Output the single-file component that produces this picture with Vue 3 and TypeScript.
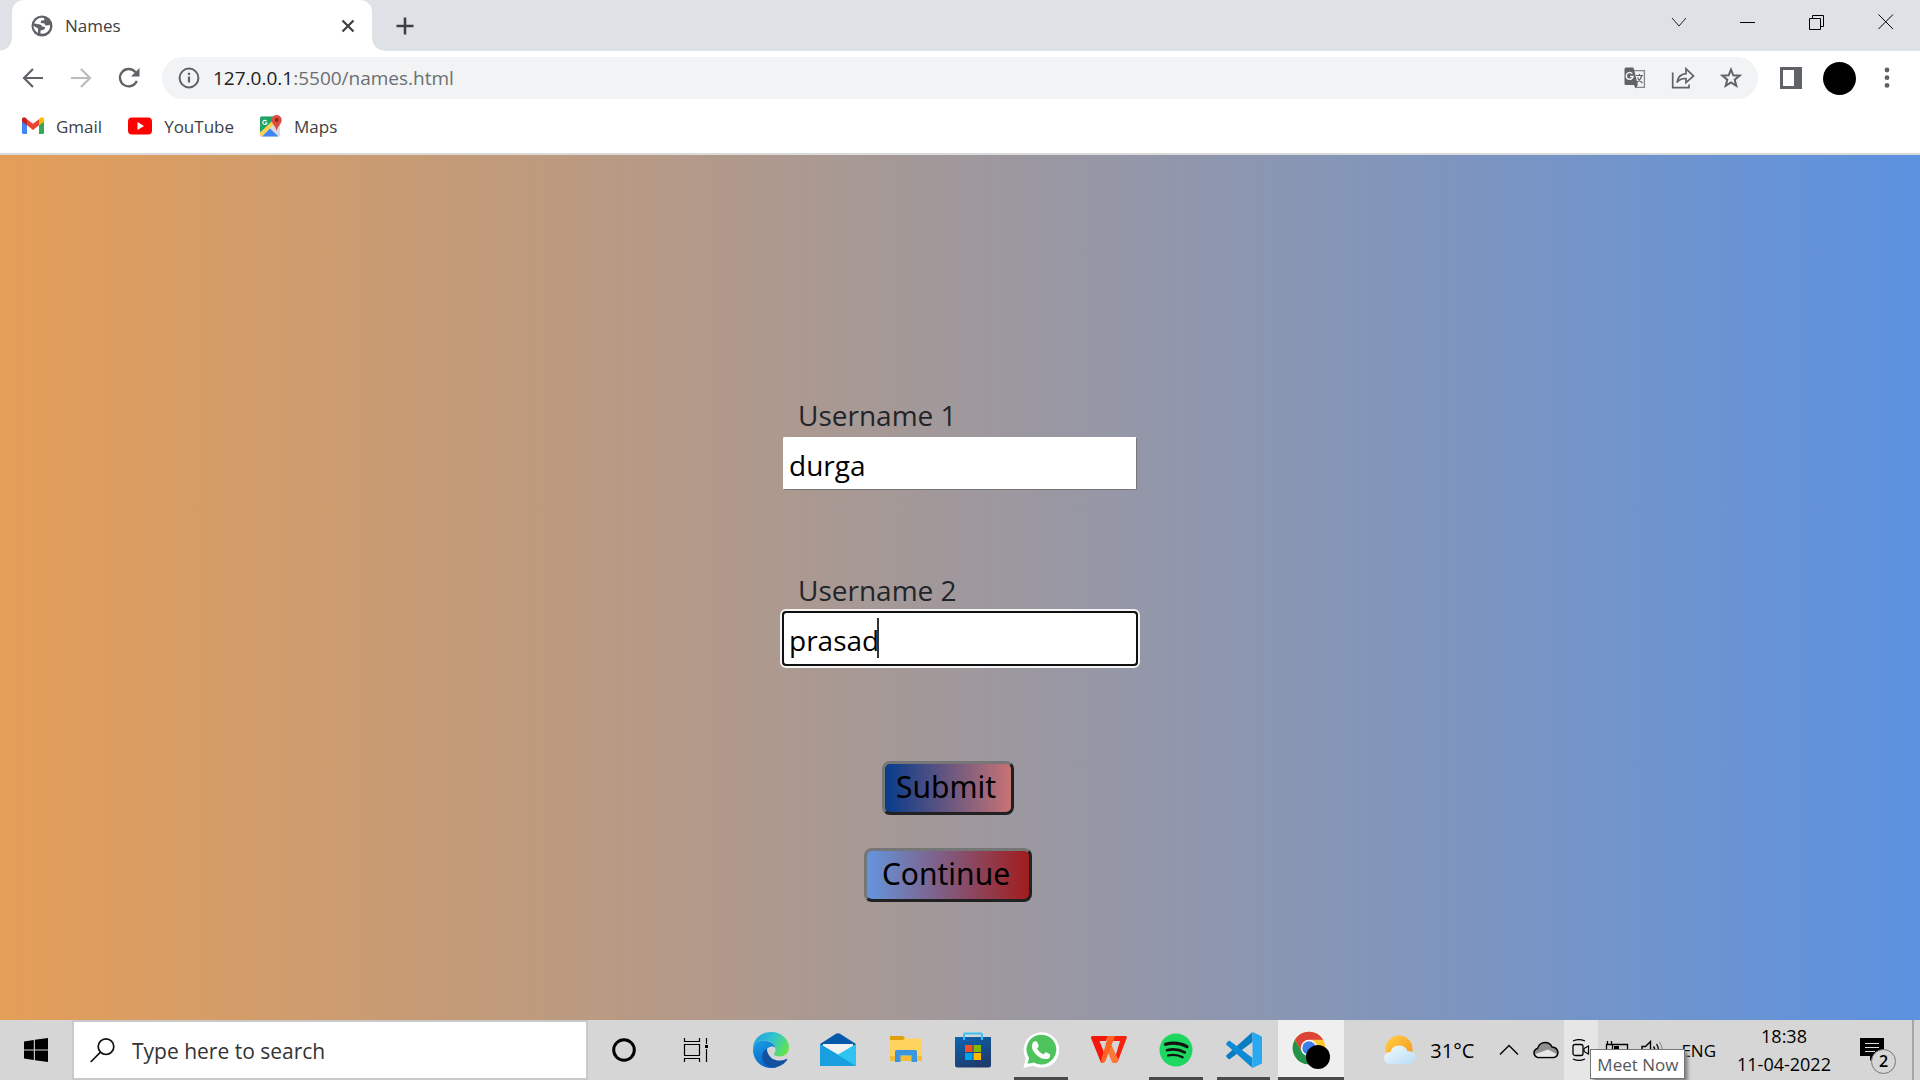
<script setup lang="ts">
import { ref } from 'vue'

const address = ref('127.0.0.1:5500/names.html')
const username1 = ref('durga')
const username2 = ref('prasad')
</script>

<template>
  <div class="desktop">
    <header class="browser">
      <div class="tabstrip">
        <div class="tab">
          <svg class="globe" width="22" height="22" viewBox="0 0 22 22">
            <circle cx="11" cy="11" r="10.5" fill="#5f6368" />
            <path d="M8.500 3.000 C6 4 4 6 3.200 8.500 L8 9.200 Q11 9.800 11 11.500 L14 12 Q14.300 14.500 12 15 L9.500 15.500 V18.600 Q14.500 19.300 17.600 15.500 Q19.500 13 19 10 L15.500 10.500 Q13.500 10.500 13.500 8.500 L10 8 Q9 6.800 10.500 5.600 L13.500 5.200 L13 3.100 Q10.500 2.400 8.500 3Z" fill="#fff" />
            <path d="M2.400 10.800 L7 13.500 V17.900 Q2.800 15.800 2.400 10.800Z" fill="#fff" />
          </svg>
          <span class="tab-title">Names</span>
          <button class="plain" aria-label="Close tab">
            <svg width="14" height="14" viewBox="0 0 14 14"><path d="M1.500 1.500L12.500 12.500M12.500 1.500L1.500 12.500" stroke="#3c4043" stroke-width="2.200" /></svg>
          </button>
        </div>
        <button class="plain new-tab" aria-label="New tab">
          <svg width="18" height="18" viewBox="0 0 18 18"><path d="M9 0.500V17.500M0.500 9H17.500" stroke="#3c4043" stroke-width="2.600" /></svg>
        </button>
        <div class="window-controls">
          <button class="plain" aria-label="Search tabs">
            <svg width="16" height="16" viewBox="0 0 16 16"><path d="M1 4L8 12L15 4" fill="none" stroke="#222" /></svg>
          </button>
          <button class="plain" aria-label="Minimize">
            <svg width="16" height="16" viewBox="0 0 16 16"><path d="M0 8.500H15" stroke="#000" /></svg>
          </button>
          <button class="plain" aria-label="Restore">
            <svg width="16" height="16" viewBox="0 0 16 16"><path d="M0.500 4.500H11.500V15.500H0.500ZM3.500 4V1.500H14.500V12.500H12" fill="none" stroke="#000" /></svg>
          </button>
          <button class="plain" aria-label="Close">
            <svg width="16" height="16" viewBox="0 0 16 16"><path d="M0.500 0.500L15 15M15 0.500L0.500 15" stroke="#000" /></svg>
          </button>
        </div>
      </div>

      <div class="toolbar">
        <div class="nav">
          <button class="plain" aria-label="Back">
            <svg width="22" height="22" viewBox="0 0 22 22"><path d="M21 11H2.500M11 2L2 11L11 20" fill="none" stroke="#5f6368" stroke-width="2.200" /></svg>
          </button>
          <button class="plain" aria-label="Forward">
            <svg width="22" height="22" viewBox="0 0 22 22"><path d="M1 11H19.500M11 2L20 11L11 20" fill="none" stroke="#babcbe" stroke-width="2.200" /></svg>
          </button>
          <button class="plain" aria-label="Reload">
            <svg width="22" height="22" viewBox="0 0 22 22"><path d="M18.800 13.800A8.700 8.700 0 1 1 17.500 5.300" fill="none" stroke="#5f6368" stroke-width="2.300" /><path d="M21.500 1V9.500H13Z" fill="#5f6368" /></svg>
          </button>
        </div>
        <div class="omnibox">
          <svg width="22" height="22" viewBox="0 0 22 22"><circle cx="11" cy="11" r="9.400" fill="none" stroke="#5f6368" stroke-width="2" /><path d="M11 9.500V15.500M11 5.800V8" stroke="#5f6368" stroke-width="2.200" /></svg>
          <div class="address" :aria-label="address"><span class="host">127.0.0.1</span>:5500/names.html</div>
          <div class="omni-actions">
            <button class="plain" aria-label="Translate">
              <svg width="22" height="22" viewBox="0 0 22 22">
                <path d="M10 3.600H20.400V20.400H11.500" fill="none" stroke="#85888c" stroke-width="1.300" />
                <path d="M2 0.500H8.500Q9.500 .5 9.800 1.500L13.800 18L11.500 21.500L10 18H2Q.5 18 .5 16.500V2Q.5 .5 2 .5Z" fill="#5f6368" />
                <path d="M8.300 6.800A3.400 3.400 0 1 0 9 9.600H6" fill="none" stroke="#f1f3f4" stroke-width="1.500" />
                <path d="M12 8.500H19M15.400 7V8.500M17.700 8.500Q17 12.500 13 15.500M13.500 10.500Q15 14 18.500 16" fill="none" stroke="#5f6368" stroke-width="1.200" />
              </svg>
            </button>
            <button class="plain" aria-label="Share">
              <svg width="24" height="22" viewBox="0 0 24 22"><path d="M1.700 5.500V20.700H18V17.500M6 15.500Q7 7.500 15 6.700V1.800L22.500 9L15 15.700V11.500Q9 11.200 6 15.500Z" fill="none" stroke="#5f6368" stroke-width="1.700" /></svg>
            </button>
            <button class="plain" aria-label="Bookmark">
              <svg width="22" height="22" viewBox="0 0 22 22"><path d="M11 2.500L13.300 8.300L19.500 8.700L14.700 12.700L16.300 18.900L11 15.500L5.700 18.900L7.300 12.700L2.500 8.700L8.700 8.300Z" fill="none" stroke="#5f6368" stroke-width="2" /></svg>
            </button>
          </div>
        </div>
        <div class="tool-actions">
          <button class="plain" aria-label="Side panel">
            <svg width="22" height="22" viewBox="0 0 22 22"><path d="M0 0H22V22H0ZM3 3V19H14V3Z" fill="#5f6368" fill-rule="evenodd" /></svg>
          </button>
          <button class="plain avatar" aria-label="Profile"></button>
          <button class="plain" aria-label="Menu">
            <svg width="6" height="22" viewBox="0 0 6 22" fill="#5f6368"><circle cx="3" cy="3" r="2.400" /><circle cx="3" cy="10.700" r="2.400" /><circle cx="3" cy="18.400" r="2.400" /></svg>
          </button>
        </div>
      </div>

      <nav class="bookmarks">
        <a href="#gmail">
          <svg width="22" height="18" viewBox="0 0 22 18"><path d="M0 4L5 7.500V17H1.500Q0 17 0 15.500Z" fill="#4285f4" /><path d="M22 4L17 7.500V17H20.500Q22 17 22 15.500Z" fill="#34a853" /><path d="M5 2.200L11 6.800L17 2.200V8.300L11 12.900L5 8.300Z" fill="#ea4335" /><path d="M0 4V2.500C0 .5 2 -.4 3.700 .9L5 2V8.300L0 4.800Z" fill="#c5221f" /><path d="M22 4V2.500C22 .5 20 -.4 18.300 .9L17 2V8.300L22 4.800Z" fill="#fbbc04" /></svg>
          <span>Gmail</span>
        </a>
        <a href="#youtube">
          <svg width="24" height="18" viewBox="0 0 24 18"><rect y="0.500" width="24" height="17" rx="4" fill="#f00" /><path d="M9.500 5L16 9L9.500 13Z" fill="#fff" /></svg>
          <span>YouTube</span>
        </a>
        <a href="#maps">
          <svg width="22" height="22" viewBox="0 0 22 22">
            <rect y="1.500" width="20" height="20" rx="1.500" fill="#dadce0" />
            <path d="M1.500 1.500H17L0 18.500V3Q0 1.500 1.500 1.500Z" fill="#1fa463" />
            <path d="M2 21.500L10 13.500L18.500 21.500Z" fill="#4285f4" />
            <path d="M0 17.500V20Q.2 21.300 1.500 21.500L14 9L12 6.500Z" fill="#ffd04b" />
            <path d="M6.500 6.100A2.100 2.100 0 1 0 6.900 8H5.200" fill="none" stroke="#fff" stroke-width="1.100" />
            <path d="M16.700 0A5 5 0 0 1 21.700 5C21.700 9 17.300 11 16.700 16.500C16 11 11.700 9 11.700 5A5 5 0 0 1 16.700 0Z" fill="#e14b3d" /><circle cx="16.700" cy="5" r="1.900" fill="#7d2a24" />
          </svg>
          <span>Maps</span>
        </a>
      </nav>
    </header>

    <main class="page">
      <form class="names" @submit.prevent>
        <div class="field">
          <label for="user1">Username 1</label>
          <input id="user1" v-model="username1" type="text" />
        </div>
        <div class="field">
          <label for="user2">Username 2</label>
          <div class="active-box">
            <input id="user2" v-model="username2" class="active" type="text" />
            <i class="caret"></i>
          </div>
        </div>
        <div class="actions">
          <button class="submit" type="submit">Submit</button>
          <button class="continue" type="button">Continue</button>
        </div>
      </form>
    </main>

    <footer class="taskbar">
      <button class="plain start" aria-label="Start">
        <svg width="24" height="24" viewBox="0 0 24 24"><path d="M0 3.400L9.800 2V11.400H0ZM10.900 1.800L24 0V11.400H10.900ZM0 12.500H9.800V22L0 20.600ZM10.900 12.500H24V24L10.900 22.200Z" /></svg>
      </button>
      <div class="search">
        <svg width="25" height="25" viewBox="0 0 25 25"><circle cx="16" cy="8.700" r="7.800" fill="none" stroke="#111" stroke-width="1.700" /><path d="M10.500 14.200L.7 24" stroke="#111" stroke-width="1.700" /></svg>
        <input type="text" placeholder="Type here to search" aria-label="Search" />
      </div>
      <button class="plain system" aria-label="Cortana">
        <svg width="24" height="24" viewBox="0 0 24 24"><circle cx="12" cy="12" r="10.300" fill="none" stroke="#000" stroke-width="3" /></svg>
      </button>
      <button class="plain system" aria-label="Task view">
        <svg width="26" height="24" viewBox="0 0 26 24"><path d="M1.500 0V3.500H16.500V0M1.500 6.500H16.500V17.500H1.500ZM1.500 24V20.500H16.500V24M23.500 0V6M23.500 11V24" fill="none" stroke="#000" stroke-width="1.200" /><rect x="22" y="7" width="3" height="3" /></svg>
      </button>

      <div class="apps">
        <button class="plain app" aria-label="Edge">
          <svg width="36" height="36" viewBox="0 0 36 36">
            <defs>
              <linearGradient id="edge-top" x1="0" y1="0.200" x2="1" y2="0.600"><stop offset="0" stop-color="#249fdc" /><stop offset=".5" stop-color="#30c5cf" /><stop offset="1" stop-color="#63e34e" /></linearGradient>
              <linearGradient id="edge-side" x1="0" y1="0" x2="0.300" y2="1"><stop offset="0" stop-color="#1b9de2" /><stop offset="1" stop-color="#0669cc" /></linearGradient>
            </defs>
            <path d="M0 17C0 7 8 0 18 0C29 0 36 8 36 15C36 21 32 24.500 27 24.500C23 24.500 21 23.500 21 22.300C21 21 23 20.500 22.500 17C22 12 17 8.500 11.500 8.500C5 8.500 1 12.500 0 17Z" fill="url(#edge-top)" />
            <path d="M0 18C.5 12 5 8.500 11 8.500C17 8.500 22 12.500 22.500 16C20 13.500 15 14.500 13.500 18C11 25 17 35 24 35C13 39 0 31 0 18Z" fill="url(#edge-side)" />
            <path d="M13.800 17C11 18 9.200 20.500 9.200 24.500C9.200 31 15 36 21 35.500C27 35 32 31.500 34.300 27.500C34.500 26.800 34 26.600 33.300 27C25 31 15 27.500 13.800 17Z" fill="#1250a0" />
          </svg>
        </button>
        <button class="plain app" aria-label="Mail">
          <svg width="36" height="34" viewBox="0 0 36 34">
            <path d="M0 11L16 .8Q18 -.4 20 .8L36 11V22H0Z" fill="#0759a9" />
            <path d="M3 11H33V18L18 26L3 18Z" fill="#f2f2f2" />
            <path d="M0 11L18 21.500L36 11V33H0Z" fill="#2fc3f2" /><path d="M0 11L36 33H0Z" fill="#199edf" />
          </svg>
        </button>
        <button class="plain app" aria-label="File Explorer">
          <svg width="32" height="28" viewBox="0 0 32 28">
            <path d="M0 1Q0 0 1 0H13Q14 0 14.500 2.500H31Q32 2.500 32 3.500V25H0Z" fill="#ffd35d" /><path d="M0 1Q0 0 1 0H13L15 2L13 4H0Z" fill="#dfa00b" /><path d="M0 20H32V24Q32 25 31 25H1Q0 25 0 24Z" fill="#f5bd35" />
            <path d="M5 26V15.500Q5 14 6.500 14H25.500Q27 14 27 15.500V26H21.500V19.500H10.500V26Z" fill="#3a96e0" />
          </svg>
        </button>
        <button class="plain app" aria-label="Microsoft Store">
          <svg width="36" height="36" viewBox="0 0 36 36">
            <defs><linearGradient id="store" x1="0" y1="0" x2="0.500" y2="1"><stop offset="0" stop-color="#0a65b5" /><stop offset="1" stop-color="#1e3c6c" /></linearGradient></defs>
            <path d="M0 5H36V33Q36 35.500 33.500 35.500H2.500Q0 35.500 0 33Z" fill="url(#store)" />
            <path d="M9 8V2.800Q9 1.500 10.300 1.500H25.700Q27 1.500 27 2.800V8" fill="none" stroke="#35c1f1" stroke-width="2" />
            <path d="M10 13H17.500V20H10Z" fill="#f25022" /><path d="M18.500 13H26V20H18.500Z" fill="#7fba00" /><path d="M10 21H17.500V28H10Z" fill="#00a4ef" /><path d="M18.500 21H26V28H18.500Z" fill="#ffb900" />
          </svg>
        </button>
        <button class="plain app running" aria-label="WhatsApp">
          <svg width="36" height="36" viewBox="0 0 36 36">
            <path d="M.3 36L2.800 26.500A17.800 17.800 0 1 1 10 33.700Z" fill="#fff" />
            <path d="M4.500 31.700L6.100 26A14.900 14.900 0 1 1 11 30.500Z" fill="#4fc35c" />
            <path d="M10.500 9.800Q12.500 8.500 14 9.800L15.700 13.700Q15.800 14.900 14 16.500Q16 20.700 20.500 22.500Q22.200 20.200 23.200 20.300L27 22.200Q28 26.700 23 27Q18 27.200 13 22.500Q8 17 9 13Q9.500 10.700 10.500 9.800Z" fill="#fff" />
          </svg>
        </button>
        <button class="plain app" aria-label="WPS Office">
          <svg width="36" height="28" viewBox="0 0 36 28">
            <path d="M0 1Q.5 0 2 0H17L15 5H8.500L14.800 21L11 27Q10 27 9.500 25.500L0 2Z" fill="#f5160c" />
            <path d="M23 0H34Q36.500 0 35.700 2L27 25Q26 27.500 22.500 27L29 5H21Z" fill="#f6220e" />
            <path d="M17 9L20.500 9L27.500 24L25.500 27H22.500Q21.500 27 21 26L15.500 13Z" fill="#ff7734" />
            <path d="M17 0H24L14.500 25Q13.500 27.500 10.500 27L10 25Z" fill="#ff6424" />
          </svg>
        </button>
        <button class="plain app running" aria-label="Spotify">
          <svg width="34" height="34" viewBox="0 0 34 34"><circle cx="17" cy="17" r="16.500" fill="#1ed760" /><path d="M6.500 11.300Q18 8.200 28 13.700" fill="none" stroke="#111" stroke-width="3.200" stroke-linecap="round" /><path d="M8 17.200Q17.500 14.800 25.800 19.400" fill="none" stroke="#111" stroke-width="2.700" stroke-linecap="round" /><path d="M9 22.500Q17 20.700 23.700 24.300" fill="none" stroke="#111" stroke-width="2.200" stroke-linecap="round" /></svg>
        </button>
        <button class="plain app running" aria-label="Visual Studio Code">
          <svg width="36" height="36" viewBox="0 0 36 36">
            <path d="M26.500 0V10L4 27Q3 27.500 2 26.600L.5 25Q-.3 24 .7 23Z" fill="#0a7dc1" />
            <path d="M26.500 36V26L4 9Q3 8.500 2 9.400L.5 11Q-.3 12 .7 13Z" fill="#0b8ad5" />
            <path d="M26.500 0L35 4Q36 4.500 36 5.500V30.500Q36 31.500 35 32L26.500 36Z" fill="#29a9f2" />
          </svg>
        </button>
        <button class="plain app running current" aria-label="Chrome">
          <svg width="38" height="38" viewBox="0 0 38 38">
            <circle cx="17" cy="17" r="16.300" fill="#ffc62d" />
            <path d="M2.900 8.800A16.300 16.300 0 0 1 31.100 8.800H17L9.900 21.100Z" fill="#dc4437" />
            <path d="M2.900 8.800L9.900 21.100L17 25.200L24 21.100L17 33.300A16.300 16.300 0 0 1 2.900 8.800Z" fill="#23924d" />
            <circle cx="17" cy="17" r="8.200" fill="#fff" /><circle cx="17" cy="17" r="6.700" fill="#3f7de8" />
            <circle cx="26" cy="26" r="12" fill="#000" />
          </svg>
        </button>
      </div>

      <div class="tray">
        <button class="plain weather">
          <svg width="34" height="30" viewBox="0 0 34 30">
            <defs>
              <linearGradient id="sun" x1="0" y1="0" x2="1" y2="1"><stop offset="0" stop-color="#ffcf43" /><stop offset="1" stop-color="#f6931d" /></linearGradient>
              <linearGradient id="cloud" x1="0" y1="0" x2="1" y2="1"><stop offset="0" stop-color="#f2fbff" /><stop offset="1" stop-color="#b9dcf5" /></linearGradient>
            </defs>
            <circle cx="16" cy="14" r="13.500" fill="url(#sun)" />
            <path d="M8 29Q1 28.500 1 22.500Q1.500 17 7.500 17Q9 10.500 16 10.500Q22.500 10.500 24.500 16Q32 16 32.500 22.500Q32 28.500 26 29Z" fill="url(#cloud)" />
          </svg>
          <span>31°C</span>
        </button>
        <button class="plain chevron" aria-label="Hidden icons">
          <svg width="20" height="12" viewBox="0 0 20 12"><path d="M1 10.500L10 1.500L19 10.500" fill="none" stroke="#000" stroke-width="1.400" /></svg>
        </button>
        <button class="plain onedrive" aria-label="OneDrive">
          <svg width="26" height="18" viewBox="0 0 26 18"><path d="M5 16.500Q1 15.500 1 12Q1 8.500 4.500 7.500Q6.500 1.500 12 1.500Q17 1.500 19 6Q24.500 6.500 25 11.500Q24.500 16 21 16.500Z" fill="#8f8f8f" stroke="#000" stroke-width="1.500" /><path d="M2.500 13L15 8.500L23.500 13Q22.500 15.700 20 15.700H5Q3 15.300 2.500 13Z" fill="#e6e6e6" /></svg>
        </button>
        <div class="meet-wrap">
          <button class="plain meet" aria-label="Meet">
            <svg width="18" height="22" viewBox="0 0 18 22"><path d="M1 2Q7 -.8 13 2M1 20Q7 22.800 13 20" fill="none" stroke="#000" stroke-width="1.300" /><rect x="1" y="5.500" width="10" height="11" rx="2" fill="none" stroke="#000" stroke-width="1.300" /><path d="M12 9.500L16.500 7V15L12 12.500Z" fill="none" stroke="#000" stroke-width="1.200" /></svg>
          </button>
          <div class="tooltip" role="tooltip">Meet Now</div>
        </div>
        <button class="plain battery" aria-label="Battery">
          <svg width="24" height="18" viewBox="0 0 24 18"><path d="M1.500 3.500H7.500V8Q7.500 10 4.500 10Q1.500 10 1.500 8ZM2.500 0V3M6.500 0V3M8 3.500H22.500V13.500H6M4.500 10V16" fill="none" stroke="#000" stroke-width="1.300" /><rect x="9" y="5" width="5" height="7" /></svg>
        </button>
        <button class="plain volume" aria-label="Volume">
          <svg width="24" height="20" viewBox="0 0 24 20"><path d="M1 6.500H4.500L9.500 1.500V18.500L4.500 13.500H1ZM12.500 6.500Q15 10 12.500 13.500" fill="none" stroke="#000" stroke-width="1.400" /><path d="M15.500 4Q19.500 10 15.500 16" fill="none" stroke="#000" stroke-width="1.300" /><path d="M18.500 2Q24 10 18.500 18" fill="none" stroke="#999" stroke-width="1.300" /></svg>
        </button>
        <button class="plain lang">ENG</button>
        <button class="plain clock"><span>18:38</span><span>11-04-2022</span></button>
        <button class="plain notices" aria-label="Notifications, 2 new">
          <svg width="24" height="24" viewBox="0 0 24 24"><path d="M0 0H24V18H15L10 23V18H0Z" /><path d="M5 5.500H19M5 9.500H19M5 13.500H15" stroke="#ddd" stroke-width="1.200" /></svg>
          <span class="badge">2</span>
        </button>
        <button class="plain show-desktop" aria-label="Show desktop"></button>
      </div>
    </footer>
  </div>
</template>

<style>
body {
  margin: 0;
}
</style>

<style scoped>
.desktop {
  display: flex;
  flex-direction: column;
  min-height: 100vh;
  font-family: "Open Sans", "Noto Sans", sans-serif;
  color: #000;
}
.desktop * {
  box-sizing: border-box;
}
svg {
  display: block;
  flex: none;
}
.plain {
  display: flex;
  align-items: center;
  justify-content: center;
  flex: none;
  margin: 0;
  padding: 0;
  border: 0;
  background: none;
  color: inherit;
  font: inherit;
}
.tabstrip {
  display: flex;
  height: 51px;
  padding-left: 12px;
  background: #dee1e6;
}
.tab {
  position: relative;
  display: flex;
  align-items: center;
  width: 360px;
  padding: 0 17px 0 19px;
  border-radius: 12px 12px 0 0;
  background: #fff;
}
.tab::before,
.tab::after {
  content: "";
  position: absolute;
  bottom: 0;
  width: 12px;
  height: 12px;
}
.tab::before {
  right: 100%;
  background: radial-gradient(circle at 0 0, transparent 11px, #fff 12px);
}
.tab::after {
  left: 100%;
  background: radial-gradient(circle at 100% 0, transparent 11px, #fff 12px);
}
.tab-title {
  flex: 1;
  margin-left: 12px;
  font-size: 17px;
  color: #3c4043;
}
.new-tab {
  width: 66px;
}
.window-controls {
  display: flex;
  margin-left: auto;
}
.window-controls .plain {
  width: 69px;
  height: 43px;
}
.toolbar {
  display: flex;
  align-items: center;
  height: 54px;
  background: #fff;
}
.nav {
  display: flex;
  gap: 26px;
  padding: 0 22px;
}
.omnibox {
  display: flex;
  flex: 1;
  align-items: center;
  height: 42px;
  padding: 0 16px;
  border-radius: 21px;
  background: #f1f3f4;
}
.address {
  flex: 1;
  margin-left: 13px;
  font-size: 19px;
  color: #6b6f73;
}
.host {
  color: #202124;
}
.omni-actions {
  display: flex;
  gap: 25px;
}
.tool-actions {
  display: flex;
  align-items: center;
  gap: 21px;
  padding: 0 30px 0 22px;
}
.tool-actions .plain:last-child {
  margin-left: 7px;
}
.avatar {
  width: 33px;
  height: 33px;
  border-radius: 50%;
  background: #000;
}
.bookmarks {
  display: flex;
  gap: 26px;
  height: 50px;
  padding: 0 22px 6px;
  border-bottom: 2px solid #dadada;
  background: #fff;
}
.bookmarks a {
  display: flex;
  align-items: center;
  gap: 12px;
  font-size: 17px;
  color: #3c4043;
  text-decoration: none;
}
.page {
  flex: 1;
  padding: 240px 24px 24px;
  background: linear-gradient(to right, #e49e58, #5c92e0);
}
.names {
  display: flex;
  flex-direction: column;
  gap: 80px;
  width: 354px;
  margin: 0 auto;
}
.field label {
  display: block;
  padding: 0 0 2px 15px;
  font-size: 28px;
  line-height: 40px;
  color: #212529;
}
.field input {
  display: block;
  width: 100%;
  height: 53px;
  margin: 0;
  padding: 2px 5px 0;
  border: 1px solid;
  border-color: #fff #767676 #767676 #fff;
  border-radius: 2px;
  background: #fff;
  color: #000;
  font-family: inherit;
  font-size: 28px;
}
.active-box {
  position: relative;
}
.field .active {
  border: 1px solid #555;
  border-radius: 3px;
  outline: 2px solid #101010;
  outline-offset: -1px;
  box-shadow: 0 0 0 3px #f4f4f4;
}
.caret {
  position: absolute;
  top: 6px;
  left: 94px;
  width: 2px;
  height: 40px;
  background: #333;
}
.actions {
  display: flex;
  flex-direction: column;
  align-items: center;
  gap: 33px;
  padding: 16px 24px 0 0;
}
.actions button {
  height: 54px;
  margin: 0;
  padding: 0 12px 2px 8px;
  border: 3px solid;
  border-color: #767676 #212121 #212121 #767676;
  border-radius: 8px;
  color: #000;
  font-family: "Noto Sans", sans-serif;
  font-size: 30px;
  line-height: 44px;
}
.actions .submit {
  width: 132px;
  background: linear-gradient(to right, #073b8c, #c87374);
}
.actions .continue {
  width: 168px;
  background: linear-gradient(to right, #6495dc, #a11d1d);
}
.taskbar {
  display: flex;
  height: 60px;
  background: #d6d6d6;
}
.start {
  width: 72px;
}
.search {
  display: flex;
  align-items: center;
  width: 516px;
  padding-left: 16px;
  border: 2px solid #c9c9c9;
  background: #fff;
}
.search input {
  flex: 1;
  min-width: 0;
  margin-left: 17px;
  padding: 2px 0 0;
  border: 0;
  outline: 0;
  background: none;
  font-family: inherit;
  font-size: 21px;
}
.search input::placeholder {
  color: #333;
  opacity: 1;
}
.system {
  width: 72px;
}
.apps {
  display: grid;
  grid-template-columns: repeat(9, 1fr);
  width: 608px;
  margin-left: 5px;
}
.app {
  position: relative;
}
.running::after {
  content: "";
  position: absolute;
  right: 7px;
  bottom: 0;
  left: 7px;
  height: 3px;
  background: #4a4a4a;
}
.current {
  margin: 0 1px;
  background: #efefef;
}
.current::after {
  right: 0;
  left: 0;
}
.tray {
  display: flex;
  margin-left: auto;
  font-size: 20px;
}
.weather {
  gap: 13px;
  margin-right: 25px;
}
.chevron {
  margin-right: 14px;
}
.onedrive {
  margin-right: 5px;
}
.meet-wrap {
  position: relative;
  display: flex;
  margin-right: 7px;
}
.meet {
  width: 34px;
  background: #e6e6e6;
}
.tooltip {
  position: absolute;
  top: 29px;
  left: 26px;
  z-index: 1;
  width: 95px;
  height: 30px;
  border: 1px solid #767676;
  background: #fff;
  box-shadow: 3px 3px 3px #888;
  color: #575757;
  font-size: 17px;
  line-height: 30px;
  text-align: center;
  white-space: nowrap;
}
.battery {
  margin-right: 12px;
}
.volume {
  margin-right: 16px;
}
.lang {
  font-size: 17px;
}
.clock {
  flex-direction: column;
  width: 136px;
  font-size: 18px;
  line-height: 28px;
}
.notices {
  position: relative;
  width: 60px;
  padding-right: 20px;
}
.badge {
  position: absolute;
  top: 29px;
  left: 19px;
  width: 25px;
  height: 25px;
  border: 1px solid #777;
  border-radius: 50%;
  background: #d6d6d6;
  font-size: 16px;
  font-weight: 600;
  line-height: 23px;
}
.show-desktop {
  width: 8px;
  border-left: 2px solid #a6a6a6;
}
</style>
